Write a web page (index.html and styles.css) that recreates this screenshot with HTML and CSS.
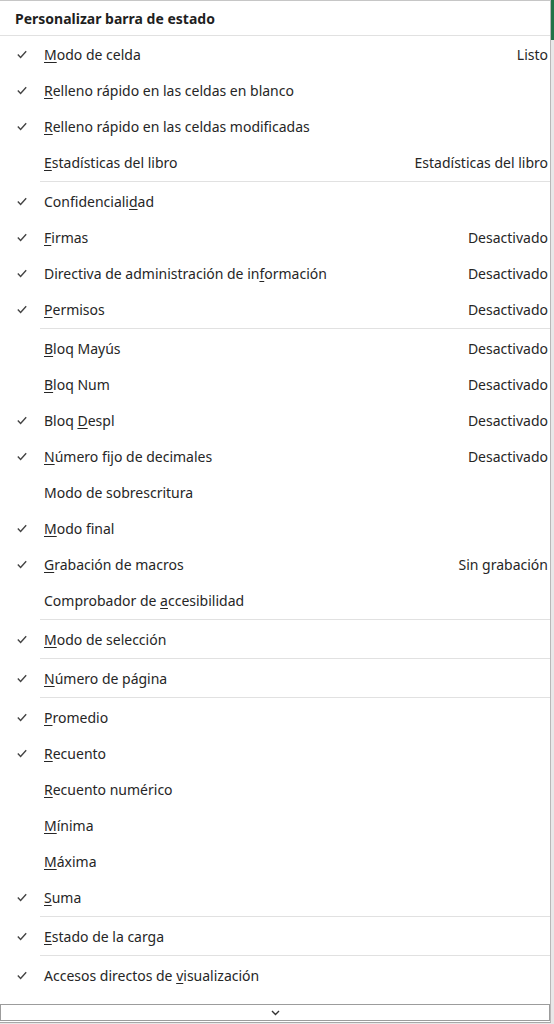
FILE: index.html
```html
<!DOCTYPE html>
<html lang="es">
<head>
<meta charset="utf-8">
<title>Personalizar barra de estado</title>
<link rel="stylesheet" href="styles.css">
</head>
<body>
<div class="menu">
  <div class="header">Personalizar barra de estado</div>
  <div class="list">
    <div class="item on"><span class="check"></span><span class="label"><u>M</u>odo de celda</span><span class="value">Listo</span></div>
    <div class="item on"><span class="check"></span><span class="label"><u>R</u>elleno rápido en las celdas en blanco</span><span class="value"></span></div>
    <div class="item on"><span class="check"></span><span class="label"><u>R</u>elleno rápido en las celdas modificadas</span><span class="value"></span></div>
    <div class="item"><span class="check"></span><span class="label"><u>E</u>stadísticas del libro</span><span class="value">Estadísticas del libro</span></div>
    <div class="sep"></div>
    <div class="item on"><span class="check"></span><span class="label">Confidenciali<u>d</u>ad</span><span class="value"></span></div>
    <div class="item on"><span class="check"></span><span class="label"><u>F</u>irmas</span><span class="value">Desactivado</span></div>
    <div class="item on"><span class="check"></span><span class="label">Directiva de administración de in<u>f</u>ormación</span><span class="value">Desactivado</span></div>
    <div class="item on"><span class="check"></span><span class="label"><u>P</u>ermisos</span><span class="value">Desactivado</span></div>
    <div class="sep"></div>
    <div class="item"><span class="check"></span><span class="label"><u>B</u>loq Mayús</span><span class="value">Desactivado</span></div>
    <div class="item"><span class="check"></span><span class="label"><u>B</u>loq Num</span><span class="value">Desactivado</span></div>
    <div class="item on"><span class="check"></span><span class="label">Bloq <u>D</u>espl</span><span class="value">Desactivado</span></div>
    <div class="item on"><span class="check"></span><span class="label"><u>N</u>úmero fijo de decimales</span><span class="value">Desactivado</span></div>
    <div class="item"><span class="check"></span><span class="label">Modo de sobrescritura</span><span class="value"></span></div>
    <div class="item on"><span class="check"></span><span class="label"><u>M</u>odo final</span><span class="value"></span></div>
    <div class="item on"><span class="check"></span><span class="label"><u>G</u>rabación de macros</span><span class="value">Sin grabación</span></div>
    <div class="item"><span class="check"></span><span class="label">Comprobador de <u>a</u>ccesibilidad</span><span class="value"></span></div>
    <div class="sep"></div>
    <div class="item on"><span class="check"></span><span class="label"><u>M</u>odo de selección</span><span class="value"></span></div>
    <div class="sep"></div>
    <div class="item on"><span class="check"></span><span class="label"><u>N</u>úmero de página</span><span class="value"></span></div>
    <div class="sep"></div>
    <div class="item on"><span class="check"></span><span class="label"><u>P</u>romedio</span><span class="value"></span></div>
    <div class="item on"><span class="check"></span><span class="label"><u>R</u>ecuento</span><span class="value"></span></div>
    <div class="item"><span class="check"></span><span class="label"><u>R</u>ecuento numérico</span><span class="value"></span></div>
    <div class="item"><span class="check"></span><span class="label"><u>M</u>ínima</span><span class="value"></span></div>
    <div class="item"><span class="check"></span><span class="label"><u>M</u>áxima</span><span class="value"></span></div>
    <div class="item on"><span class="check"></span><span class="label"><u>S</u>uma</span><span class="value"></span></div>
    <div class="sep"></div>
    <div class="item on"><span class="check"></span><span class="label"><u>E</u>stado de la carga</span><span class="value"></span></div>
    <div class="sep"></div>
    <div class="item on"><span class="check"></span><span class="label">Accesos directos de <u>v</u>isualización</span><span class="value"></span></div>
    <div class="item on"><span class="check"></span><span class="label">Control deslizante del <u>z</u>oom</span><span class="value"></span></div>
  </div>
  <div class="scroll-down">
    <svg width="9" height="6" viewBox="0 0 9 6"><path d="M1 1 L4.5 4.5 L8 1" fill="none" stroke="#333" stroke-width="1.4"/></svg>
  </div>
</div>
</body>
</html>
```

FILE: styles.css
```css
html, body {
  margin: 0;
  padding: 0;
  background: #ffffff;
}
body {
  width: 554px;
  height: 1024px;
  overflow: hidden;
  font-family: "Noto Sans", "Open Sans", sans-serif;
  color: #262626;
  background: linear-gradient(to bottom, #217346 0, #217346 40px, #e8e8e8 40px);
}
.menu {
  width: 551px;
  height: 1023px;
  box-sizing: border-box;
  border-top: 1px solid #c6c6c6;
  border-right: 1px solid #b8b8b8;
  border-bottom: 1px solid #a8a8a8;
  background: #ffffff;
  display: flex;
  flex-direction: column;
  overflow: hidden;
}
.header {
  height: 35px;
  flex: none;
  box-sizing: border-box;
  border-bottom: 1px solid #e1e1e1;
  padding: 2px 0 0 15px;
  font-size: 14px;
  font-weight: 700;
  line-height: 32px;
  color: #1f1f1f;
}
.list {
  flex: 1;
  min-height: 0;
  overflow: hidden;
}
.item {
  height: 36px;
  display: flex;
  align-items: center;
  font-size: 14px;
}
.item u {
  text-decoration-thickness: 1px;
  text-underline-offset: 2px;
}
.check {
  width: 44px;
  flex: none;
  height: 36px;
}
.item.on .check {
  background: no-repeat 17px 50%;
  background-image: url("data:image/svg+xml,%3Csvg xmlns='http://www.w3.org/2000/svg' width='10' height='9' viewBox='0 0 10 9'%3E%3Cpath d='M0.8 4.6 L3.6 7.4 L9.2 1.2' fill='none' stroke='%23444' stroke-width='1.4'/%3E%3C/svg%3E");
}
.label {
  flex: 1;
  white-space: nowrap;
}
.value {
  flex: none;
  padding-right: 2px;
  white-space: nowrap;
}
.sep {
  height: 1px;
  margin: 1px 0 1px 40px;
  background: #e1e1e1;
}
.scroll-down {
  flex: none;
  height: 17px;
  box-sizing: border-box;
  border: 1px solid #9c9c9c;
  margin-bottom: 1px;
  display: flex;
  align-items: center;
  justify-content: center;
  background: #ffffff;
}
```
